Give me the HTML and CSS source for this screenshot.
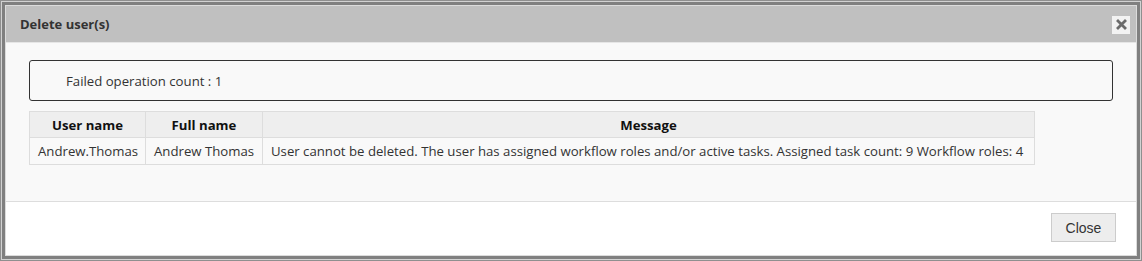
FILE: index.html
```html
<!DOCTYPE html>
<html>
<head>
<meta charset="utf-8">
<link rel="stylesheet" href="styles.css">
</head>
<body>
<div class="frame">
  <div class="dialog">
    <div class="header">
      <span class="title">Delete user(s)</span>
      <button class="xbtn" aria-label="close">
        <svg width="11" height="11" viewBox="0 0 11 11"><path d="M2 2 L9 9 M9 2 L2 9" stroke="#6b6b6b" stroke-width="2.8" stroke-linecap="square"/></svg>
      </button>
    </div>
    <div class="body">
      <div class="summary">Failed operation count : 1</div>
      <table class="results">
        <thead>
          <tr><th class="c1">User name</th><th class="c2">Full name</th><th>Message</th></tr>
        </thead>
        <tbody>
          <tr><td>Andrew.Thomas</td><td>Andrew Thomas</td><td>User cannot be deleted. The user has assigned workflow roles and/or active tasks. Assigned task count: 9 Workflow roles: 4</td></tr>
        </tbody>
      </table>
    </div>
    <div class="footer">
      <button class="close">Close</button>
    </div>
  </div>
</div>
</body>
</html>
```

FILE: styles.css
```css
html, body {
  margin: 0;
  padding: 0;
  background: #ffffff;
}
.frame {
  width: 1142px;
  height: 261px;
  box-sizing: border-box;
  padding: 6px;
  background: #ffffff;
  box-shadow: inset 0 0 0 1px #8f8f8f, inset 0 0 0 2px #d2d2d2, inset 0 0 0 5px #808080, inset 0 0 0 6px #dcdcdc;
}
.dialog {
  display: flex;
  flex-direction: column;
  height: 100%;
  font-family: "Open Sans", "Noto Sans", sans-serif;
  color: #333333;
}
.header {
  height: 36px;
  flex: none;
  background: #c0c0c0;
  border-bottom: 1px solid #e6e6e6;
  display: flex;
  align-items: center;
  justify-content: space-between;
  padding: 0 6px 0 14px;
}
.title {
  font-size: 13px;
  font-weight: 700;
  color: #333333;
}
.xbtn {
  width: 18px;
  height: 18px;
  border: none;
  padding: 0;
  background: #f2f2f2;
  display: flex;
  align-items: center;
  justify-content: center;
  margin-top: 1px;
}
.body {
  background: #f9f9f9;
  height: 159px;
  flex: none;
  box-sizing: border-box;
  padding: 17px 23px 0 23px;
  border-bottom: 1px solid #dddddd;
}
.summary {
  height: 39px;
  border: 1px solid #333333;
  border-radius: 3px;
  display: flex;
  align-items: center;
  padding-left: 36px;
  font-size: 13.2px;
  color: #333333;
}
.results {
  margin-top: 10px;
  border-collapse: collapse;
  table-layout: fixed;
  width: 1006px;
  font-size: 13.2px;
}
.results th, .results td {
  border: 1px solid #dddddd;
  padding: 0 8px;
  white-space: nowrap;
  overflow: visible;
}
.results th {
  height: 25px;
  background: #eeeeee;
  font-weight: 700;
  color: #111111;
  text-align: center;
}
.results td {
  height: 26px;
  color: #333333;
}
.results .c1 { width: 99px; }
.results .c2 { width: 100px; }
.footer {
  flex: 1;
  background: #ffffff;
  display: flex;
  justify-content: flex-end;
  align-items: flex-start;
  padding: 11px 20px 0 0;
}
.close {
  width: 65px;
  height: 29px;
  background: #ededed;
  border: 1px solid #cccccc;
  font-family: "Liberation Sans", Arial, sans-serif;
  font-size: 14px;
  color: #333333;
  padding: 0;
}
```
